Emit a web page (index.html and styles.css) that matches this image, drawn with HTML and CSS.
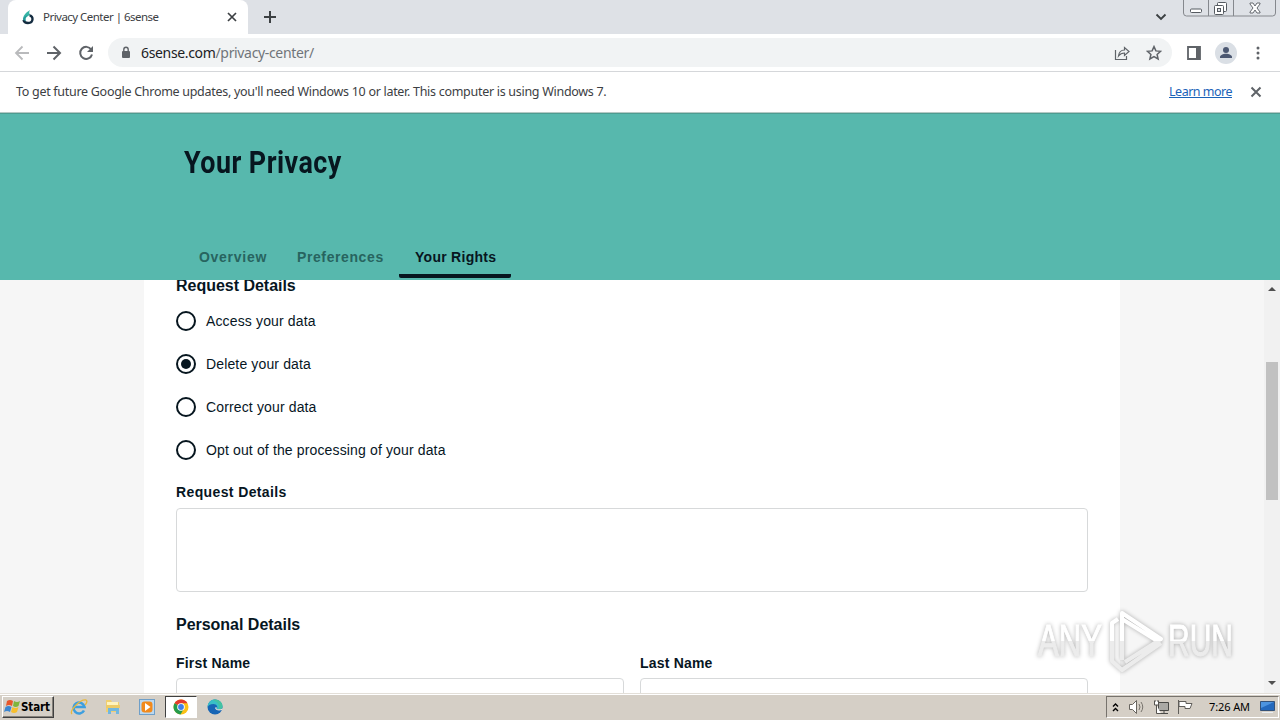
FILE: index.html
```html
<!DOCTYPE html>
<html lang="en">

<head>
  <meta charset="UTF-8">
  <title>Privacy Center | 6sense</title>
  <link rel="stylesheet" href="styles.css">
</head>

<body>

  <!-- Tab strip -->
  <div class="tab-strip">
    <div class="browser-tab">
      <svg class="favicon" width="12" height="16" viewBox="0 0 12 16">
        <path d="M8 1C3 4 1 7 1 11c2 0 2-3 7-5-1-2-1-3 0-5z" fill="#35b5a6"/>
        <path d="M7.500 6.500c4 0 4.500 7.500-1.500 7.500-2 0-4-1-4.500-3" fill="none" stroke="#142c40" stroke-width="2.400"/>
        <path d="M1 11c0-3 2-4 5-5-2 2-3 3-2 6z" fill="#289b9a"/>
      </svg>
      <span class="tab-title">Privacy Center | 6sense</span>
      <svg width="10" height="10" viewBox="0 0 10 10"><path d="M1 1l8 8M9 1L1 9" stroke="#3c4043" stroke-width="1.7"/></svg>
    </div>
    <svg class="new-tab" width="12" height="12" viewBox="0 0 12 12"><path d="M6 0v12M0 6h12" stroke="#3c4043" stroke-width="2"/></svg>
    <svg class="tab-search" width="12" height="8" viewBox="0 0 12 8"><path d="M1.500 1.500L6 6l4.500-4.500" fill="none" stroke="#3c4043" stroke-width="1.900"/></svg>
    <svg class="window-buttons" width="93" height="18" viewBox="0 0 93 18">
      <path d="M.5 0v13q0 3 3 3h86q3 0 3-3V0M25.500 0v16M50.500 0v16" fill="none" stroke="#85888d"/>
      <rect x="7.500" y="9" width="11" height="3.500" rx="1" fill="#fff" stroke="#555a60"/>
      <rect x="34.500" y="2.500" width="9" height="9" rx="1" fill="#fff" stroke="#555a60"/>
      <rect x="31.500" y="5.500" width="9" height="9" rx="1" fill="#fff" stroke="#555a60"/>
      <rect x="34.500" y="8.500" width="3" height="3" fill="#dee1e6" stroke="#555a60"/>
      <path d="M67 3h3l2 3 2-3h3v1l-3 4 3 4v1h-3l-2-3-2 3h-3v-1l3-4-3-4z" fill="#fff" stroke="#666a70"/>
    </svg>
  </div>

  <!-- Address bar -->
  <div class="toolbar">
    <svg width="16" height="16" viewBox="0 0 16 16"><path d="M15 8H2M8.500 1.500L2 8l6.500 6.500" fill="none" stroke="#b9babc" stroke-width="1.800"/></svg>
    <svg width="16" height="16" viewBox="0 0 16 16"><path d="M1 8h13M7.500 1.500L14 8l-6.500 6.500" fill="none" stroke="#5f6368" stroke-width="2"/></svg>
    <svg width="16" height="16" viewBox="0 0 16 16"><path d="M13.200 4.500A6 6 0 1 0 14 9.500" fill="none" stroke="#5f6368" stroke-width="2"/><path d="M15 1v6H9z" fill="#5f6368"/></svg>
    <div class="address">
      <svg width="10" height="13" viewBox="0 0 10 13"><rect x="1" y="5" width="8" height="7" rx="1" fill="#5f6368"/><path d="M2.800 6V3.500a2.200 2.200 0 0 1 4.400 0V6" fill="none" stroke="#5f6368" stroke-width="1.400"/></svg>
      <span class="url">6sense.com<span class="url-path">/privacy-center/</span></span>
      <svg class="share" width="16" height="16" viewBox="0 0 16 16"><path d="M1.500 5v9.500h11V11" fill="none" stroke="#5f6368" stroke-width="1.200"/><path d="M4.500 11c.5-4 2.500-6 6-6V2.500L15 6.500l-4.500 4V8c-3 0-4.500 1-6 3z" fill="none" stroke="#5f6368" stroke-width="1.200"/></svg>
      <svg width="16" height="16" viewBox="0 0 16 16"><path d="M8 1.600l1.900 4.300 4.700.4-3.500 3.100 1 4.600L8 11.600 3.900 14l1-4.600-3.500-3.100 4.700-.4z" fill="none" stroke="#5f6368" stroke-width="1.500"/></svg>
    </div>
    <svg class="side-panel" width="14" height="14" viewBox="0 0 14 14"><path d="M1 1h12v12H1z" fill="none" stroke="#5f6368" stroke-width="1.800"/><path d="M9 1h4v12H9z" fill="#5f6368"/></svg>
    <svg class="avatar" width="22" height="22" viewBox="0 0 22 22"><circle cx="11" cy="11" r="11" fill="#dadfe5"/><circle cx="11" cy="8" r="3" fill="#4c5872"/><path d="M5 16v-1c0-2 3-3.300 6-3.300s6 1.300 6 3.300v1z" fill="#4c5872"/></svg>
    <svg width="4" height="14" viewBox="0 0 4 14" fill="#5f6368"><circle cx="2" cy="2" r="1.500"/><circle cx="2" cy="7" r="1.500"/><circle cx="2" cy="12" r="1.500"/></svg>
  </div>

  <div class="infobar">
    <span class="info-text">To get future Google Chrome updates, you'll need Windows 10 or later. This computer is using Windows 7.</span>
    <a class="learn-more" href="#">Learn more</a>
    <svg width="12" height="12" viewBox="0 0 12 12"><path d="M1.500 1.500l9 9M10.500 1.500l-9 9" stroke="#5f6368" stroke-width="2"/></svg>
  </div>

  <!-- Page header -->
  <header class="page-header">
    <h1>Your Privacy</h1>
    <nav class="tabs">
      <a class="tab overview">Overview</a>
      <a class="tab preferences">Preferences</a>
      <a class="tab active">Your Rights</a>
    </nav>
  </header>

  <!-- Scrolled form -->
  <main class="page">
    <form class="panel">
      <h2>Request Details</h2>
      <div class="radios">
        <label class="radio"><i class="dot"></i><span>Access your data</span></label>
        <label class="radio"><i class="dot checked"></i><span>Delete your data</span></label>
        <label class="radio"><i class="dot"></i><span>Correct your data</span></label>
        <label class="radio"><i class="dot"></i><span>Opt out of the processing of your data</span></label>
      </div>
      <div class="field-label details-label">Request Details</div>
      <div class="textarea"></div>
      <h2 class="personal">Personal Details</h2>
      <div class="names">
        <div>
          <div class="field-label">First Name</div>
          <div class="input"></div>
        </div>
        <div>
          <div class="field-label">Last Name</div>
          <div class="input"></div>
        </div>
      </div>
    </form>
    <div class="scrollbar">
      <i class="arrow up"></i>
      <div class="thumb"></div>
      <i class="arrow down"></i>
    </div>
  </main>

  <!-- Windows taskbar -->
  <footer class="taskbar">
    <div class="start">
      <svg width="17" height="16" viewBox="0 0 17 16"><path d="M3 2q3-2 6 0L8 7Q5 5 2 7z" fill="#e8572a"/><path d="M10 2q3 2 6 0l-1.500 5q-3 2-5.500 0z" fill="#7fb53c"/><path d="M1.500 8q3-2 6 0l-1.500 5q-3-2-6 0z" fill="#3c86d0"/><path d="M8.500 8q3 2 6 0L13 13q-3 2-6 0z" fill="#f7bf2d"/></svg>
      <span>Start</span>
    </div>
    <div class="launcher">
      <svg width="18" height="18" viewBox="0 0 18 18"><path d="M14 12.500A5.500 5.500 0 1 1 14.500 9H5" fill="none" stroke="#3d9fdf" stroke-width="2.600"/><path d="M2 16C-1 13 10 1 16 2c2 1 0 4-1 5" fill="none" stroke="#e8b83c" stroke-width="1.300"/></svg>
    </div>
    <div class="launcher">
      <svg width="18" height="18" viewBox="0 0 18 18"><path d="M2 2h5l1 2h7v10H2z" fill="#f0cf70"/><path d="M3 4h11v4H3z" fill="#fff3bd"/><path d="M2 7h14v3H2z" fill="#edcb68"/><path d="M4 16v-6h11v6h-3v-3H7v3z" fill="#72b7df"/></svg>
    </div>
    <div class="launcher">
      <svg width="18" height="18" viewBox="0 0 18 18"><rect x="1.500" y="1.500" width="15" height="15" fill="#bcd8ef" stroke="#6f9fc8"/><rect x="3.500" y="3.500" width="11" height="11" rx="3" fill="#f28a1c"/><path d="M7 5l5.500 4L7 13z" fill="#fff"/></svg>
    </div>
    <div class="launcher running">
      <svg width="16" height="16" viewBox="0 0 16 16"><circle cx="8" cy="8" r="7.500" fill="#fbc116"/><path d="M8 8L1.500 4.250A7.500 7.500 0 0 1 14.500 4.250H8z" fill="#e33b2e"/><path d="M8 8L1.500 4.250A7.500 7.500 0 0 0 7.500 15.500l3.500-6z" fill="#259b4c"/><circle cx="8" cy="8" r="3.800" fill="#fff"/><circle cx="8" cy="8" r="2.900" fill="#3f7fe8"/></svg>
    </div>
    <div class="launcher">
      <svg width="18" height="18" viewBox="0 0 18 18"><circle cx="9" cy="9" r="7.500" fill="#1765b5"/><path d="M1.500 9C2 4 5 1.500 9 1.500c5 0 8 4 7.500 7.500-.5 3-5 3-6 2 2-2 0-5-3-5-3 0-5 1-6 3z" fill="#39bfc7"/><path d="M9 1.500c5 0 8 4 7.500 7.500-.5 2-2 2.500-4 2.500 2-4-1-8-6-9.500z" fill="#50c878" opacity=".45"/><path d="M9 9.500c0 3 4 3.500 7 2.500l.5-1.500c-2 1-5 1-6 .5l.5-1.500z" fill="#e6e2da"/></svg>
    </div>
    <div class="tray">
      <svg class="chevrons" width="7" height="10" viewBox="0 0 7 10"><path d="M1 4.500L3.500 2 6 4.500M1 9l2.500-2.500L6 9" fill="none" stroke="#000" stroke-width="1.400"/></svg>
      <svg class="speaker" width="18" height="16" viewBox="0 0 18 16"><path d="M1.500 5.500h3l4-4v13l-4-4h-3z" fill="#fff" stroke="#68655f"/><path d="M11 5q2 3 0 6M13 3q3.500 5 0 10" fill="none" stroke="#77736c"/></svg>
      <svg class="network" width="17" height="16" viewBox="0 0 17 16"><path d="M5.500 3.500h10v8h-10zM8 14.500h7M11 12v2" fill="#aaa9a5" stroke="#494946"/><path d="M1.500 2v4h4V2M3.500 6v8.500H8M2 1v2m3-2v2" fill="#fff" stroke="#55534f"/></svg>
      <svg class="flag" width="17" height="16" viewBox="0 0 17 16"><path d="M1.500 1v14M2 2.500h7v2h6l-2 5H8v-2H2z" fill="#fff" stroke="#605e5a"/></svg>
      <span class="clock">7:26 AM</span>
      <svg width="15" height="14" viewBox="0 0 15 14"><path d="M.5 1.500h14v9H.5z" fill="#2469bd" stroke="#345279"/><path d="M1 2h13L1 8z" fill="#4d94df"/><path d="M2 12.500h11" stroke="#e9edf1"/></svg>
    </div>
  </footer>

  <svg class="watermark" width="214" height="70" viewBox="0 0 214 70">
    <defs>
      <linearGradient id="fade" gradientUnits="userSpaceOnUse" x1="0" y1="0" x2="0" y2="70">
        <stop offset="0.51" stop-color="#fff"/>
        <stop offset="0.52" stop-color="#ececec"/>
      </linearGradient>
    </defs>
    <g class="mark-text">
      <text x="4" y="51" textLength="64" lengthAdjust="spacingAndGlyphs">ANY</text>
      <text x="134" y="51" textLength="65" lengthAdjust="spacingAndGlyphs">RUN</text>
    </g>
    <path class="mark-play" d="M84 14l-6 4v38l10 9 39-27M88 55V8l39 26-36 23M88 14l37 23"/>
  </svg>

</body>

</html>
```
FILE: styles.css
```css
* {
  box-sizing: border-box;
}

body {
  margin: 0;
  width: 1280px;
  height: 720px;
  overflow: hidden;
  position: relative;
  display: flex;
  flex-direction: column;
  font-family: "Liberation Sans", Arial, sans-serif;
  color: #07161f;
}

svg {
  display: block;
  flex: none;
}

span, a {
  white-space: nowrap;
}

/* Browser */
.tab-strip {
  height: 34px;
  flex: none;
  background: #dee1e6;
  display: flex;
  align-items: flex-start;
  padding-left: 8px;
}

.browser-tab {
  width: 240px;
  height: 34px;
  background: #fff;
  border-radius: 8px 8px 0 0;
  display: flex;
  align-items: center;
  padding: 0 11px 0 14px;
}

.tab-title {
  flex: 1;
  margin: -2px 0 0 9px;
  font: 11.500px "Noto Sans", sans-serif;
  letter-spacing: -0.53px;
  color: #3c4043;
}

.new-tab {
  margin: 11px 0 0 16px;
}

.tab-search {
  margin: 13px 16px 0 auto;
}

.window-buttons {
  margin-right: 4px;
}

.toolbar {
  height: 38px;
  flex: none;
  background: #fff;
  border-bottom: 1px solid #d5d7da;
  display: flex;
  align-items: center;
  gap: 16px;
  padding: 0 20px 0 14px;
}

.address {
  width: 1064px;
  height: 29px;
  margin-left: -2px;
  border-radius: 15px;
  background: #f1f3f4;
  display: flex;
  align-items: center;
  padding: 0 10px 0 13px;
}

.url {
  margin-left: 10px;
  font: 14px "Noto Sans", sans-serif;
  letter-spacing: -0.34px;
  color: #202124;
}

.url-path {
  color: #70757a;
}

.share {
  margin: 0 16px 0 auto;
}

.side-panel {
  margin-left: -1px;
}

.avatar {
  margin: 0 3px 0 -2px;
}

.infobar {
  height: 41px;
  flex: none;
  background: #fff;
  border-bottom: 1px solid #b5c9c5;
  display: flex;
  align-items: center;
  padding: 0 18px 0 16px;
  font: 12.500px "Noto Sans", sans-serif;
  color: #3c4043;
}

.info-text {
  margin-top: -2px;
  letter-spacing: -0.29px;
}

.learn-more {
  margin: -2px 18px 0 auto;
  color: #1a62b8;
  letter-spacing: -0.5px;
}

/* Header */
.page-header {
  height: 167px;
  flex: none;
  background: #57b8ad;
  border-top: 1px solid #4e9c91;
  padding-left: 183px;
  display: flex;
  flex-direction: column;
  justify-content: space-between;
}

.page-header h1 {
  margin: 29px 0 0 1px;
  font: bold 32px/38px Roboto, sans-serif;
  letter-spacing: 0.55px;
  transform: scaleX(0.84);
  transform-origin: left;
}

.tabs {
  display: flex;
  margin-bottom: 2px;
}

.tab {
  width: 112px;
  height: 37px;
  padding: 8px 0 0 16px;
  font-size: 14px;
  font-weight: bold;
  line-height: 17px;
  letter-spacing: 0.6px;
  color: #27645f;
}

.overview {
  width: 98px;
  letter-spacing: 0.72px;
}

.preferences {
  width: 118px;
}

.tab.active {
  color: #07161f;
  border-bottom: 4px solid #07161f;
  border-radius: 2px;
  letter-spacing: 0.27px;
}

/* Form */
.page {
  height: 413px;
  flex: none;
  display: flex;
  overflow: hidden;
  background: #f6f6f6;
}

.panel {
  width: 976px;
  margin: 0 144px;
  padding: 0 32px;
  background: #fff;
  flex: none;
}

h2 {
  margin: -4px 0 0;
  font-size: 16px;
  line-height: 20px;
  letter-spacing: -0.02px;
}

.radios {
  display: flex;
  flex-direction: column;
  gap: 23px;
  margin-top: 15px;
}

.radio {
  display: flex;
  align-items: center;
  gap: 10px;
  height: 20px;
  font-size: 14px;
  letter-spacing: 0.14px;
}

.dot {
  width: 20px;
  height: 20px;
  border: 2px solid #07161f;
  border-radius: 50%;
  display: flex;
  align-items: center;
  justify-content: center;
}

.dot.checked::after {
  content: "";
  width: 10px;
  height: 10px;
  border-radius: 50%;
  background: #07161f;
}

.field-label {
  margin-top: 24px;
  font-size: 14px;
  font-weight: bold;
  line-height: 16px;
  letter-spacing: 0.2px;
}

.details-label {
  letter-spacing: 0.38px;
}

.textarea {
  height: 84px;
  margin-top: 8px;
  border: 1px solid #d7d9da;
  border-radius: 4px;
}

h2.personal {
  margin-top: 23px;
}

.names {
  display: grid;
  grid-template-columns: 1fr 1fr;
  gap: 16px;
  margin-top: -4px;
}

.names .field-label {
  margin-top: 24px;
}

.input {
  height: 40px;
  margin-top: 7px;
  border: 1px solid #d7d9da;
  border-radius: 4px;
}

.scrollbar {
  width: 16px;
  flex: none;
  background: #f1f1f1;
  display: flex;
  flex-direction: column;
  align-items: center;
  padding: 7px 0 8px;
}

.arrow {
  border: 4px solid transparent;
}

.arrow.up {
  border-top: 0;
  border-bottom-color: #505050;
}

.arrow.down {
  margin-top: auto;
  border-bottom: 0;
  border-top-color: #505050;
}

.thumb {
  width: 12px;
  height: 138px;
  margin-top: 71px;
  background: #c1c1c1;
}

/* Taskbar */
.taskbar {
  height: 27px;
  flex: none;
  background: #d5cfc6;
  border-top: 1px solid #e3dfd8;
  box-shadow: inset 0 1px #fff;
  display: flex;
  align-items: center;
  padding: 0 1px 0 2px;
}

.start {
  width: 52px;
  height: 22px;
  margin-right: 9px;
  border: 1px solid;
  border-color: #fff #404040 #404040 #fff;
  box-shadow: inset -1px -1px #85817a;
  display: flex;
  align-items: center;
  padding-left: 1px;
  font: bold 11.500px "DejaVu Sans Condensed", "DejaVu Sans", sans-serif;
  color: #000;
}

.start span {
  letter-spacing: -0.1px;
}

.launcher {
  width: 32px;
  height: 22px;
  margin-right: 2px;
  display: flex;
  align-items: center;
  justify-content: center;
}

.running {
  background: #fff;
  border: 1px solid;
  border-color: #404040 #fff #fff #404040;
}

.tray {
  width: 173px;
  height: 22px;
  margin-left: auto;
  border: 1px solid;
  border-color: #77736d #fff #fff #77736d;
  display: flex;
  align-items: center;
  padding-left: 5px;
}

.speaker {
  margin-left: 9px;
}

.network {
  margin-left: 7px;
}

.flag {
  margin-left: 7px;
}

.clock {
  margin: -1px 10px 0 15px;
  font: 11px "Noto Sans", sans-serif;
  letter-spacing: -0.1px;
  color: #000;
}

/* Sits above the form and the page edge */
.watermark {
  position: absolute;
  left: 1034px;
  top: 605px;
  filter: drop-shadow(0 0 2px rgba(0, 0, 0, 0.3));
}

.mark-text {
  font: 45px "Liberation Sans Narrow", "Liberation Sans", sans-serif;
  fill: url(#fade);
  stroke: url(#fade);
  stroke-width: 1;
}

.mark-play {
  fill: none;
  stroke: url(#fade);
  stroke-width: 4;
  stroke-linejoin: round;
}
```
